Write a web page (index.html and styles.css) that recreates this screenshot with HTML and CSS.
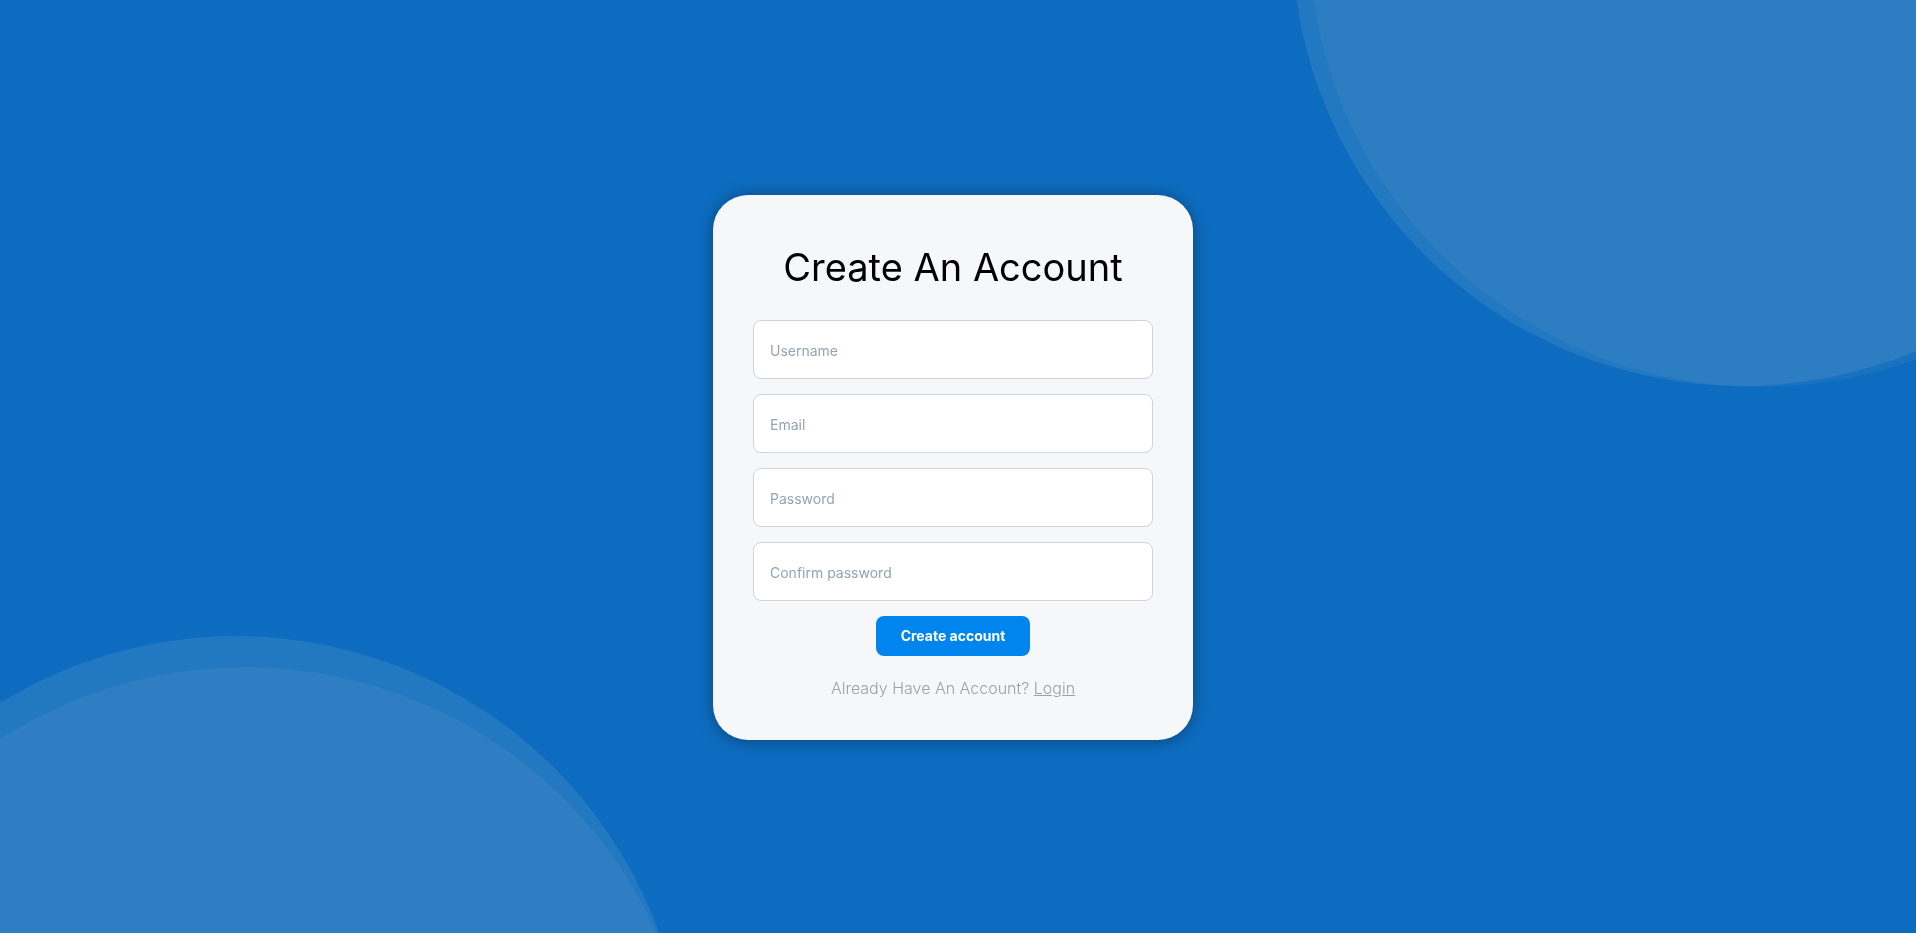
FILE: index.html
```html
<!DOCTYPE html>
<html lang="en">
<head>
<meta charset="utf-8">
<meta name="viewport" content="width=device-width, initial-scale=1">
<title>Create An Account</title>
<link rel="stylesheet" href="styles.css">
</head>
<body class="page">
<div class="backdrop" aria-hidden="true">
  <div class="circle circle-top-outer"></div>
  <div class="circle circle-top-inner"></div>
  <div class="circle circle-bottom-outer"></div>
  <div class="circle circle-bottom-inner"></div>
</div>
<main class="card">
  <h1 class="title">Create An Account</h1>
  <form class="form">
    <input class="field" type="text" name="username" placeholder="Username" aria-label="Username">
    <input class="field" type="email" name="email" placeholder="Email" aria-label="Email">
    <input class="field" type="password" name="password" placeholder="Password" aria-label="Password">
    <input class="field" type="password" name="confirm" placeholder="Confirm password" aria-label="Confirm password">
    <button class="submit" type="submit">Create account</button>
  </form>
  <p class="signin">Already Have An Account? <a class="signin-link" href="#">Login</a></p>
</main>
</body>
</html>
```
FILE: styles.css
```css
* {
  box-sizing: border-box;
}

.page {
  display: flex;
  align-items: center;
  justify-content: center;
  min-height: 100vh;
  margin: 0;
  padding: 1px 10px 0 0;
  background: #0d6cbf;
  font-family: Inter, "Liberation Sans", sans-serif;
}

.backdrop {
  position: fixed;
  inset: 0;
  overflow: hidden;
}

.circle {
  position: absolute;
  border-radius: 50%;
}

.circle-top-outer,
.circle-bottom-outer {
  width: 900px;
  height: 900px;
  background: rgba(217, 217, 217, 0.11);
}

.circle-top-inner,
.circle-bottom-inner {
  width: 904px;
  height: 904px;
  background: rgba(217, 217, 217, 0.06);
}

.circle-top-outer {
  top: -514px;
  right: -276px;
}

.circle-top-inner {
  top: -517px;
  right: -297px;
}

.circle-bottom-outer {
  bottom: -603px;
  left: -214px;
}

.circle-bottom-inner {
  bottom: -638px;
  left: -207px;
  background: rgba(217, 217, 217, 0.07);
}

.card {
  position: relative;
  width: 100%;
  max-width: 480px;
  padding: 40px;
  border-radius: 35px;
  background: #f6f7f9;
  box-shadow: 0 1px 16px rgba(0, 0, 0, 0.36);
  text-align: center;
}

.title {
  margin: 0 0 21px;
  color: #000;
  font-size: 38px;
  font-weight: 400;
  line-height: 64px;
}

.form {
  display: flex;
  flex-direction: column;
  align-items: center;
  gap: 15px;
}

.field {
  width: 100%;
  height: 59px;
  padding: 2px 16px 0;
  border: 1px solid #cbd5e0;
  border-radius: 8px;
  background: #fff;
  color: #2d3748;
  font: 400 14px Inter, "Liberation Sans", sans-serif;
}

.field::placeholder {
  color: #94a3b5;
}

.submit {
  height: 40px;
  padding: 0 25px;
  border: 0;
  border-radius: 8px;
  background: #0085ee;
  color: #fff;
  font: 700 14px Inter, "Liberation Sans", sans-serif;
}

.signin {
  margin: 20px 0 0;
  color: #a0a0a0;
  font-size: 16px;
  font-weight: 300;
  line-height: 24px;
}

.signin-link {
  color: inherit;
}
```
